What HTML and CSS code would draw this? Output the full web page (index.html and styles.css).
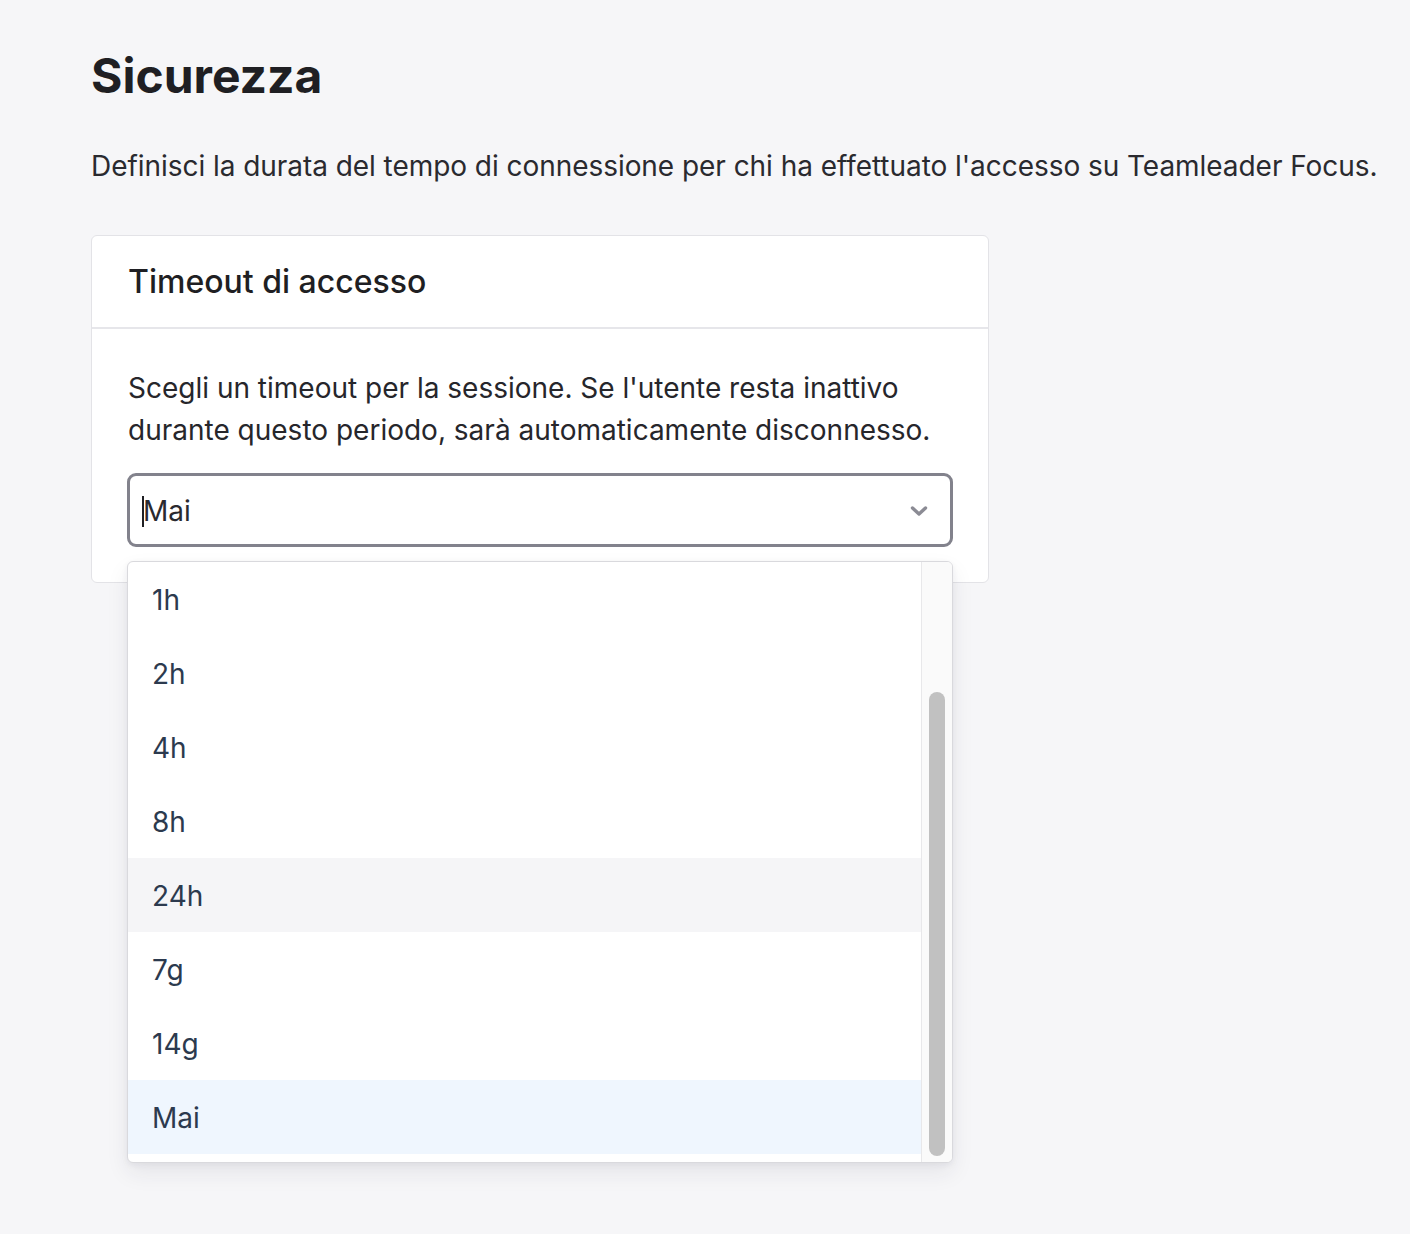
FILE: index.html
```html
<!DOCTYPE html>
<html lang="it">
<head>
<meta charset="utf-8">
<title>Sicurezza</title>
<link rel="stylesheet" href="styles.css">
</head>
<body>
<main class="page">
  <h1 class="title">Sicurezza</h1>
  <p class="intro">Definisci la durata del tempo di connessione per chi ha effettuato l'accesso su Teamleader Focus.</p>
  <section class="card">
    <header class="card-header">
      <h2 class="card-title">Timeout di accesso</h2>
    </header>
    <div class="card-body">
      <p class="desc">Scegli un timeout per la sessione. Se l'utente resta inattivo durante questo periodo, sarà automaticamente disconnesso.</p>
      <div class="select">
        <div class="select-field">
          <span class="caret"></span><span class="select-value">Mai</span>
          <svg class="chevron" width="18" height="12" viewBox="0 0 18 12"><path d="M2.5 3 L9 9 L15.5 3" fill="none" stroke="#8b8b94" stroke-width="3.4" stroke-linecap="round" stroke-linejoin="round"/></svg>
        </div>
        <div class="menu">
          <ul class="options">
            <li class="option">1h</li>
            <li class="option">2h</li>
            <li class="option">4h</li>
            <li class="option">8h</li>
            <li class="option hover">24h</li>
            <li class="option">7g</li>
            <li class="option">14g</li>
            <li class="option selected">Mai</li>
          </ul>
          <div class="scroll-track"><div class="scroll-thumb"></div></div>
        </div>
      </div>
    </div>
  </section>
</main>
</body>
</html>
```
FILE: styles.css
```css
* { box-sizing: border-box; }
html, body { margin: 0; padding: 0; }
body {
  background: #f6f6f8;
  font-family: Inter, "Noto Sans", sans-serif;
  color: #26262b;
  width: 1410px;
  height: 1234px;
  overflow: hidden;
}
.page {
  padding: 46px 0 0 91px;
}
.title {
  margin: 0;
  font-size: 48px;
  font-weight: 700;
  line-height: 60px;
  color: #1f1f23;
}
.intro {
  margin: 40px 0 0;
  font-size: 28px;
  line-height: 40px;
  color: #2a2a2f;
  white-space: nowrap;
  letter-spacing: -0.05px;
}
.card {
  margin-top: 49px;
  width: 898px;
  background: #fff;
  border: 1px solid #e3e3e7;
  border-radius: 6px;
}
.card-header {
  height: 93px;
  border-bottom: 2px solid #e6e6ea;
  display: flex;
  align-items: center;
  padding: 0 36px;
}
.card-title {
  margin: 0;
  font-size: 32px;
  font-weight: 500;
  color: #1f1f23;
}
.card-body {
  padding: 38px 35px 35px;
}
.desc {
  margin: 0 0 22px;
  font-size: 28px;
  line-height: 42px;
  padding-left: 1px;
  color: #26262b;
}
.select {
  position: relative;
}
.select-field {
  height: 74px;
  border: 3px solid #82828c;
  border-radius: 9px;
  display: flex;
  align-items: center;
  padding: 2px 22px 0 12px;
  font-size: 28px;
  color: #2a2a2f;
}
.caret {
  width: 2px;
  height: 31px;
  background: #1f1f23;
  margin-right: -1px;
}
.select-value {
  flex: 1;
}
.chevron {
  display: block;
}
.menu {
  position: absolute;
  top: 88px;
  left: 0;
  width: 826px;
  height: 602px;
  background: #fff;
  border: 1px solid #d9d9dd;
  border-radius: 6px;
  box-shadow: 0 10px 22px rgba(40, 40, 60, 0.08), 0 2px 6px rgba(40, 40, 60, 0.06);
  display: flex;
  overflow: hidden;
}
.options {
  list-style: none;
  margin: 0;
  padding: 0 0 8px;
  flex: 1;
}
.option {
  height: 74px;
  display: flex;
  align-items: center;
  padding: 2px 0 0 24px;
  font-size: 28px;
  color: #2c3a4e;
}
.option.hover { background: #f5f5f7; }
.option.selected { background: #eff6fe; }
.scroll-track {
  width: 31px;
  border-left: 1px solid #e8e8ea;
  background: #fafafa;
  padding: 130px 7px 6px 7px;
  display: flex;
}
.scroll-thumb {
  flex: 1;
  background: #c1c1c1;
  border-radius: 8px;
}
```
